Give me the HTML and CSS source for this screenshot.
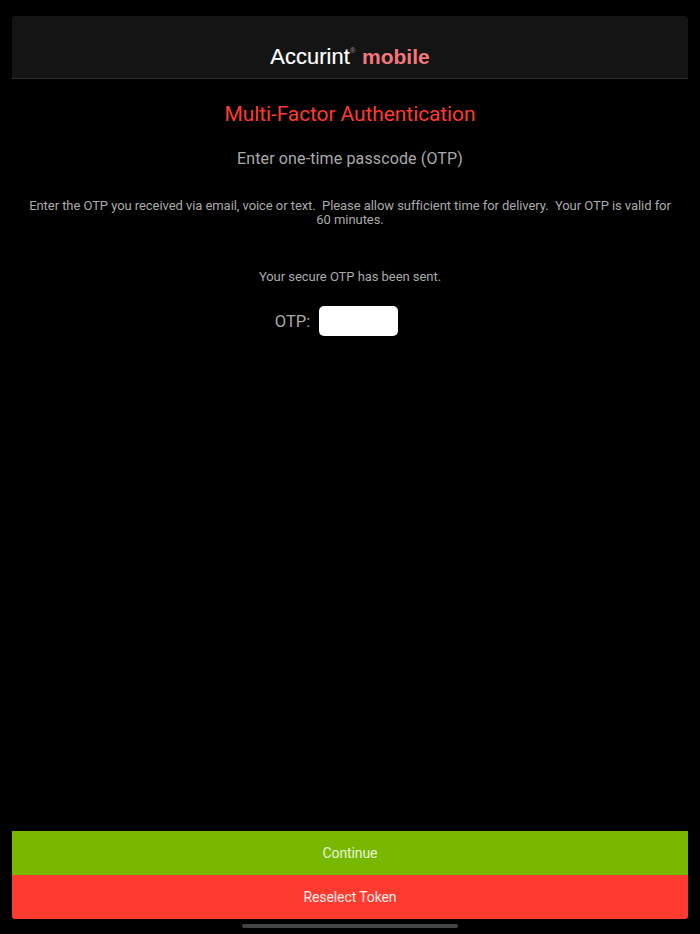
FILE: index.html
```html
<!DOCTYPE html>
<html lang="en">
<head>
<meta charset="utf-8">
<title>Accurint mobile</title>
<link rel="stylesheet" href="styles.css">
</head>
<body>
<div class="page">
  <header class="bar"><span class="logo">Accurint<sup class="reg">®</sup> <b class="mobile">mobile</b></span></header>
  <main class="content">
    <h1 class="title">Multi-Factor Authentication</h1>
    <h2 class="subtitle">Enter one-time passcode (OTP)</h2>
    <p class="info">Enter the OTP you received via email, voice or text.&nbsp; Please allow sufficient time for delivery.&nbsp; Your OTP is valid for 60 minutes.</p>
    <p class="sent">Your secure OTP has been sent.</p>
    <div class="otp"><label class="otp-label" for="otp">OTP:</label><input class="otp-input" id="otp" type="text"></div>
  </main>
  <footer class="actions">
    <button class="btn continue">Continue</button>
    <button class="btn reselect">Reselect Token</button>
  </footer>
  <div class="home"></div>
</div>
</body>
</html>
```
FILE: styles.css
```css
* { box-sizing: border-box; }
html, body { margin: 0; height: 100%; background: #000; }
body { font-family: Roboto, "Liberation Sans", Arial, sans-serif; }
.page { height: 934px; padding: 16px 12px 0; display: flex; flex-direction: column; overflow: hidden; }
.bar { height: 63px; background: #141414; border-bottom: 1px solid #2c2c2c; border-radius: 3px 3px 0 0; display: flex; justify-content: center; align-items: flex-end; padding-bottom: 8px; }
.logo { color: #fff; font-family: "Liberation Sans", Arial, sans-serif; font-size: 21.8px; line-height: 26px; letter-spacing: 0.1px; -webkit-text-stroke: 0.2px #fff; }
.reg { font-size: 8px; vertical-align: 11px; line-height: 0; color: #999; -webkit-text-stroke: 0; }
.mobile { color: #f4777c; font-size: 21px; font-weight: 700; letter-spacing: 0; -webkit-text-stroke: 0; }
.content { flex: 1; display: flex; flex-direction: column; align-items: center; text-align: center; padding: 0 12px; }
.title { margin: 21px 0 0; color: #ff3b30; font-size: 21px; font-weight: 400; line-height: 28px; letter-spacing: -0.1px; }
.subtitle { margin: 21px 0 0; color: #aaa; font-size: 16px; font-weight: 400; line-height: 20px; letter-spacing: 0.13px; }
.info { margin: 30px 0 0; color: #aaa; font-size: 13px; line-height: 14px; letter-spacing: -0.06px; }
.sent { margin: 42px 0 0; color: #aaa; font-size: 13px; line-height: 16px; letter-spacing: -0.05px; }
.otp { margin: 21px 27px 0 0; display: flex; align-items: center; gap: 9px; }
.otp-label { color: #aaa; font-size: 16.5px; }
.otp-input { width: 79px; height: 30px; border: 0; border-radius: 5px; background: #fff; }
.actions { display: flex; flex-direction: column; border-radius: 0 0 3px 3px; overflow: hidden; }
.btn { height: 44px; padding-top: 1px; border: 0; color: #e9f5d8; font: 14px Roboto, "Liberation Sans", Arial, sans-serif; letter-spacing: -0.1px; }
.continue { background: #78b800; }
.reselect { background: #ff3b30; color: #ffe9e7; }
.home { width: 216px; height: 4px; margin: 5px auto 6px; border-radius: 2px; background: #444; }
```
